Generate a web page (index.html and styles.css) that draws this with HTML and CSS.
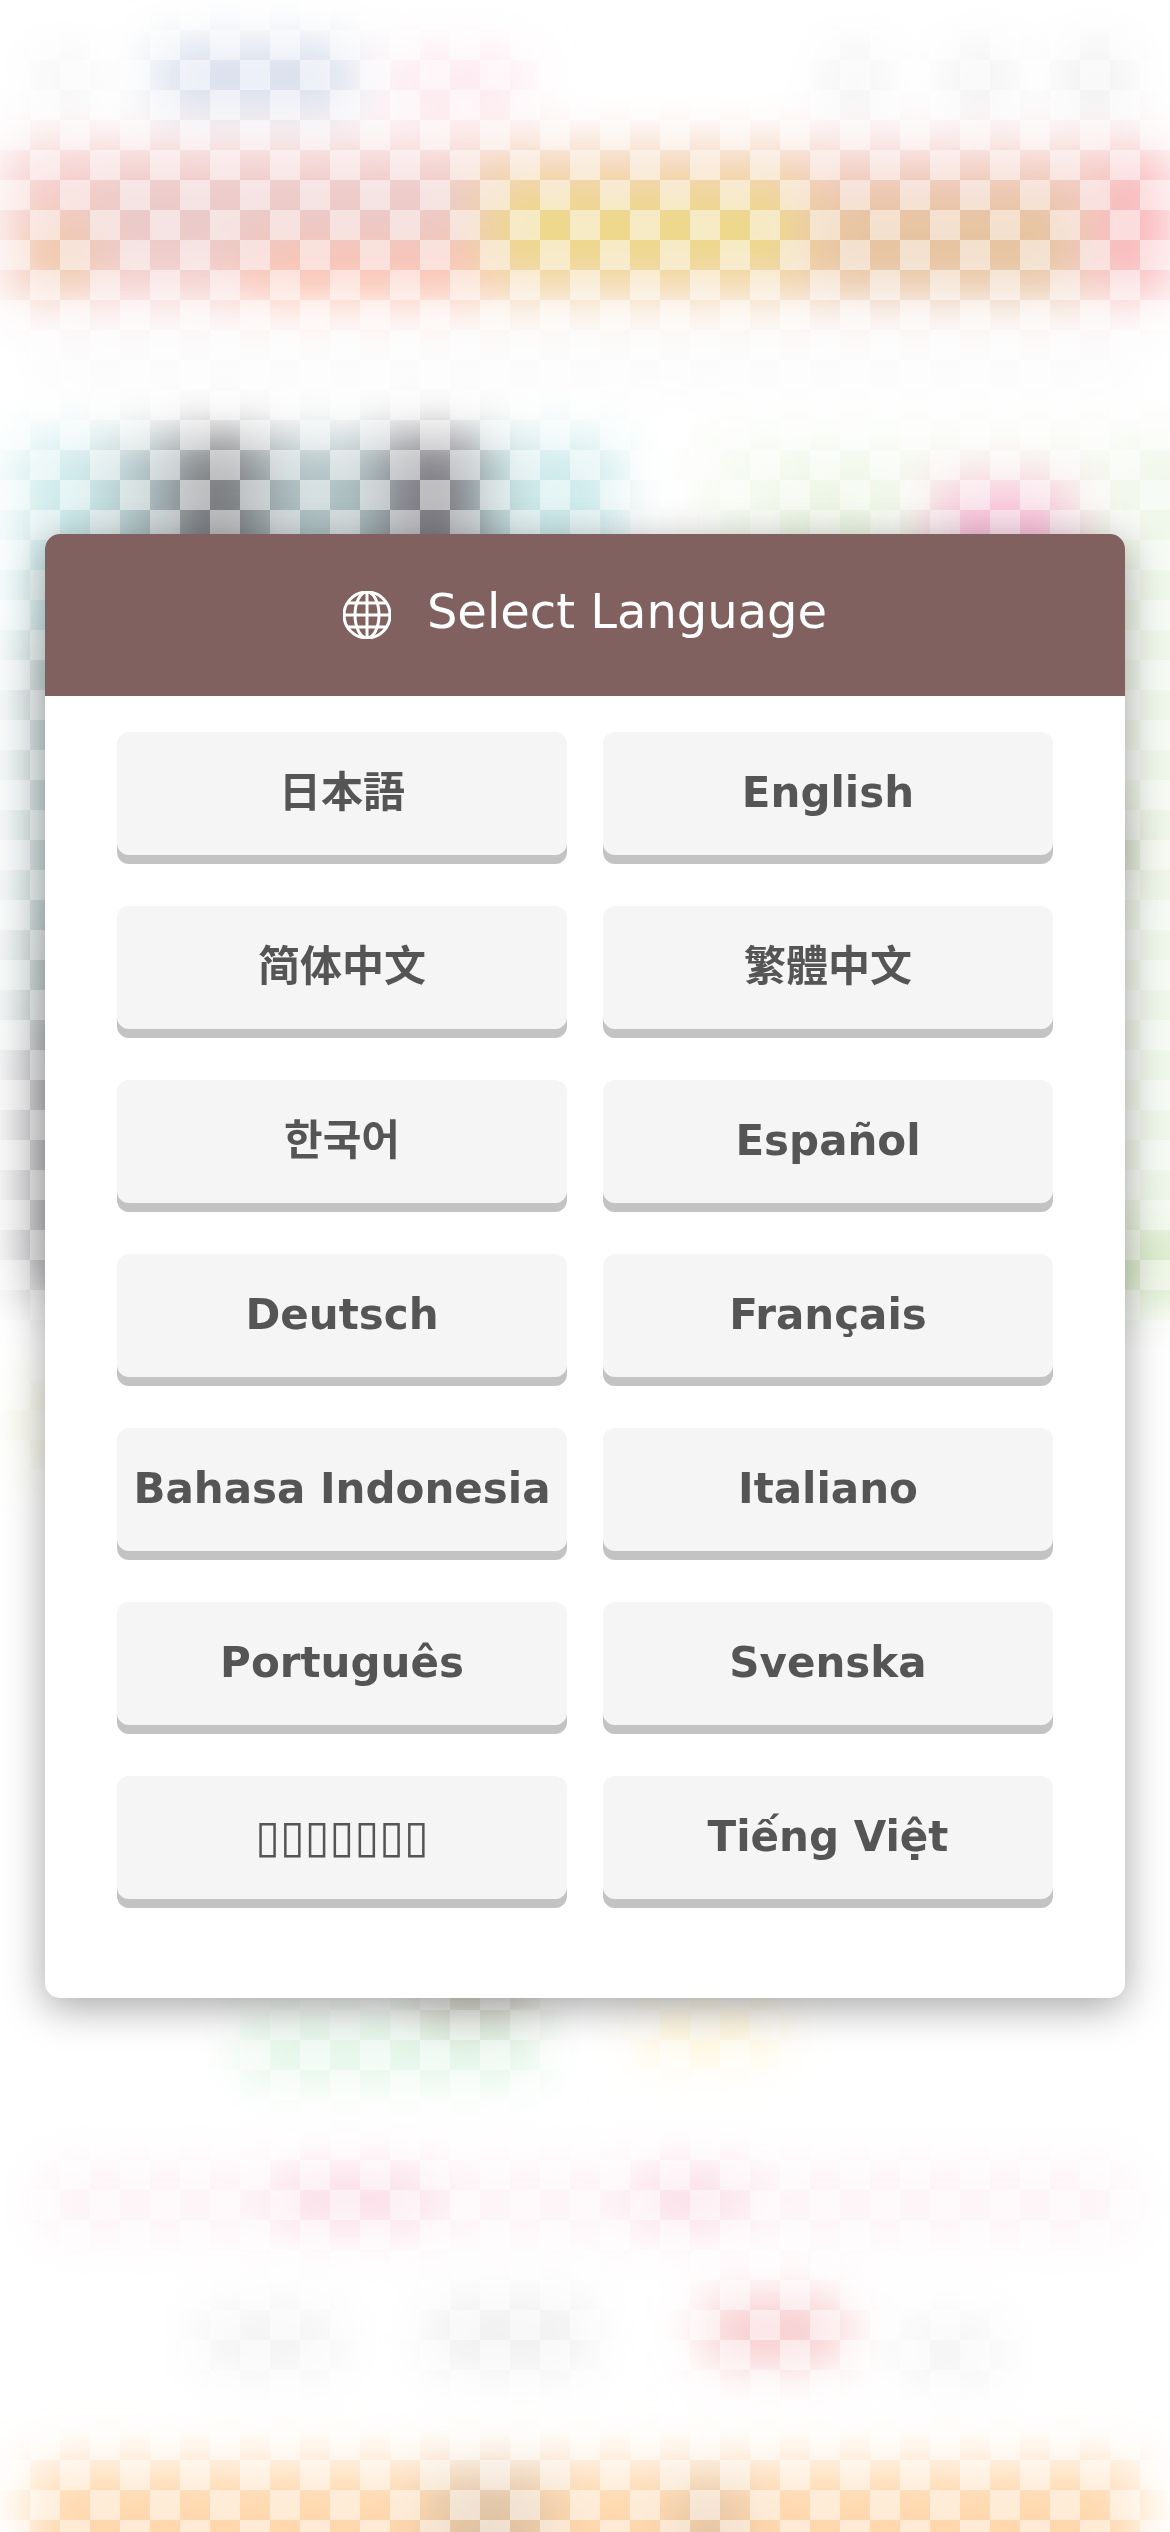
FILE: index.html
```html
<!DOCTYPE html>
<html lang="en">
<head>
<meta charset="utf-8">
<meta name="viewport" content="width=device-width, initial-scale=1">
<title>Select Language</title>
<link rel="stylesheet" href="styles.css">
</head>
<body>
<div class="backdrop" aria-hidden="true">
  <svg class="backdrop-art" viewBox="0 0 1170 2532" preserveAspectRatio="none">
    <defs>
      <filter id="soft" filterUnits="userSpaceOnUse" x="-100" y="-100" width="1370" height="2832"><feGaussianBlur stdDeviation="26"/></filter>
    </defs>
    <rect width="1170" height="2532" fill="#fff"/>
    <g filter="url(#soft)">
      <rect x="40" y="55" width="50" height="50" fill="#f1f1f1"/>
      <rect x="155" y="45" width="200" height="65" fill="#d4dbea"/>
      <rect x="385" y="55" width="140" height="60" fill="#fde6ed"/>
      <rect x="830" y="50" width="50" height="60" fill="#eeeeee"/>
      <rect x="950" y="50" width="60" height="60" fill="#eeeeee"/>
      <rect x="1065" y="50" width="60" height="60" fill="#ebebeb"/>

      <rect x="5" y="145" width="1160" height="155" fill="#f5cecc"/>
      <rect x="30" y="225" width="60" height="60" fill="#efc69a"/>
      <rect x="90" y="180" width="390" height="80" fill="#e9cbc9"/>
      <rect x="240" y="245" width="240" height="55" fill="#fcc0ae"/>
      <rect x="475" y="155" width="330" height="145" fill="#f3d0ae"/>
      <rect x="490" y="190" width="310" height="80" fill="#edd988"/>
      <rect x="810" y="185" width="270" height="110" fill="#e7c4a0"/>
      <rect x="1110" y="160" width="60" height="130" fill="#fab4b8"/>
      <rect x="40" y="335" width="1090" height="40" fill="#faf8f8"/>

      <rect x="20" y="440" width="600" height="220" fill="#cdeaeb"/>
      <rect x="110" y="440" width="390" height="230" fill="#b0c2c5"/>
      <rect x="170" y="436" width="95" height="230" fill="#7c7b7f"/>
      <rect x="380" y="436" width="100" height="230" fill="#7f7d83"/>
      <rect x="24" y="640" width="90" height="300" fill="#bccdcd"/>
      <rect x="24" y="920" width="90" height="120" fill="#b0bebe"/>
      <rect x="24" y="1030" width="90" height="265" fill="#acacb0"/>
      <rect x="700" y="440" width="430" height="870" fill="#f5faf0"/>
      <rect x="1120" y="440" width="100" height="870" fill="#f0f7ea"/>
      <rect x="780" y="470" width="110" height="140" fill="#ecf6e4"/>
      <rect x="930" y="480" width="145" height="120" fill="#f9c2da"/>
      <rect x="1040" y="825" width="80" height="50" fill="#9fb98d"/>
      <rect x="1040" y="1230" width="180" height="70" fill="#d9ebc8"/>
      <rect x="20" y="1390" width="60" height="70" fill="#f5f5e0"/>

      <rect x="240" y="2020" width="300" height="58" fill="#def5e4"/>
      <rect x="420" y="1970" width="110" height="50" fill="#dcd0c8"/>
      <rect x="640" y="2010" width="140" height="45" fill="#fff4d2"/>
      <rect x="40" y="2165" width="1090" height="70" fill="#fdf3f7"/>
      <rect x="280" y="2170" width="150" height="55" fill="#fbd9e5"/>
      <rect x="640" y="2170" width="100" height="55" fill="#fbd9e5"/>
      <rect x="200" y="2310" width="140" height="60" fill="#f2f2f2"/>
      <rect x="430" y="2300" width="160" height="70" fill="#efefef"/>
      <rect x="705" y="2300" width="140" height="62" fill="#f7c6c8"/>
      <rect x="900" y="2320" width="100" height="60" fill="#f3f3f3"/>
      <rect x="30" y="2464" width="1110" height="200" fill="#ffd8ae"/>
      <rect x="430" y="2474" width="120" height="190" fill="#dfc3a4"/>
      <rect x="680" y="2484" width="60" height="180" fill="#dfc3a4"/>
    </g>
  </svg>
</div>
<main class="page">
  <section class="dialog" role="dialog" aria-labelledby="dialog-title">
    <header class="dialog-header">
      <h1 class="dialog-title" id="dialog-title"><svg class="globe" viewBox="0 0 48 48" aria-hidden="true">
        <circle cx="24" cy="24" r="23"/>
        <ellipse cx="24" cy="24" rx="12" ry="23"/>
        <path d="M24 1v46M1 24h46M5 12h38M5 36h38"/>
      </svg>Select Language</h1>
    </header>
    <div class="languages">
      <button type="button" class="language" lang="ja">日本語</button>
      <button type="button" class="language" lang="en">English</button>
      <button type="button" class="language" lang="zh-Hans">简体中文</button>
      <button type="button" class="language" lang="zh-Hant">繁體中文</button>
      <button type="button" class="language" lang="ko">한국어</button>
      <button type="button" class="language" lang="es">Español</button>
      <button type="button" class="language" lang="de">Deutsch</button>
      <button type="button" class="language" lang="fr">Français</button>
      <button type="button" class="language" lang="id">Bahasa Indonesia</button>
      <button type="button" class="language" lang="it">Italiano</button>
      <button type="button" class="language" lang="pt">Português</button>
      <button type="button" class="language" lang="sv">Svenska</button>
      <button type="button" class="language" lang="th">▯▯▯▯▯▯▯</button>
      <button type="button" class="language" lang="vi">Tiếng Việt</button>
    </div>
  </section>
</main>
</body>
</html>
```
FILE: styles.css
```css
* {
  box-sizing: border-box;
}

body {
  margin: 0;
  background: #fff;
  font-family: "DejaVu Sans", "Noto Sans CJK JP", sans-serif;
}

.backdrop {
  position: fixed;
  inset: 0;
  z-index: -1;
}

.backdrop-art {
  display: block;
  width: 100%;
  height: 100%;
}

/* translucent white checks over the blurred art */
.backdrop::after {
  content: "";
  position: absolute;
  inset: 0;
  background: conic-gradient(transparent 25%, rgba(255, 255, 255, 0.48) 0 50%, transparent 0 75%, rgba(255, 255, 255, 0.48) 0) 0 0 / 60px 60px;
}

.page {
  display: flex;
  align-items: center;
  justify-content: center;
  min-height: 100vh;
  padding: 45px;
}

.dialog {
  flex: 1;
  overflow: hidden;
  border-radius: 15px;
  background: #fff;
  box-shadow: 0 9px 42px rgba(0, 0, 0, 0.36);
}

.dialog-header {
  padding: 48px 36px;
  background: #80615f;
  color: #fff;
  text-align: center;
}

.dialog-title {
  margin: 0;
  font-size: 48px;
  font-weight: 400;
  line-height: 56px;
}

.globe {
  width: 48px;
  height: 48px;
  margin: 9px 36px 9px 0;
  vertical-align: middle;
  fill: none;
  stroke: #fff;
  stroke-width: 3;
}

.languages {
  display: grid;
  grid-template-columns: 1fr 1fr;
  gap: 42px 36px;
  padding: 36px 72px 90px;
}

.language {
  height: 132px;
  padding: 0 0 11px;
  border: 0;
  border-radius: 12px;
  background: #f5f5f5;
  box-shadow: inset 0 -9px #c3c3c3;
  color: #555;
  font-family: inherit;
  font-size: 42px;
  font-weight: 700;
  line-height: 48px;
  white-space: nowrap;
  cursor: pointer;
}

.language:lang(zh-Hans) {
  font-family: "DejaVu Sans", "Noto Sans CJK SC", sans-serif;
}

.language:lang(zh-Hant) {
  font-family: "DejaVu Sans", "Noto Sans CJK TC", sans-serif;
}

.language:lang(ko) {
  font-family: "DejaVu Sans", "Noto Sans CJK KR", sans-serif;
}

.language:lang(th) {
  font-size: 45px;
}
```
